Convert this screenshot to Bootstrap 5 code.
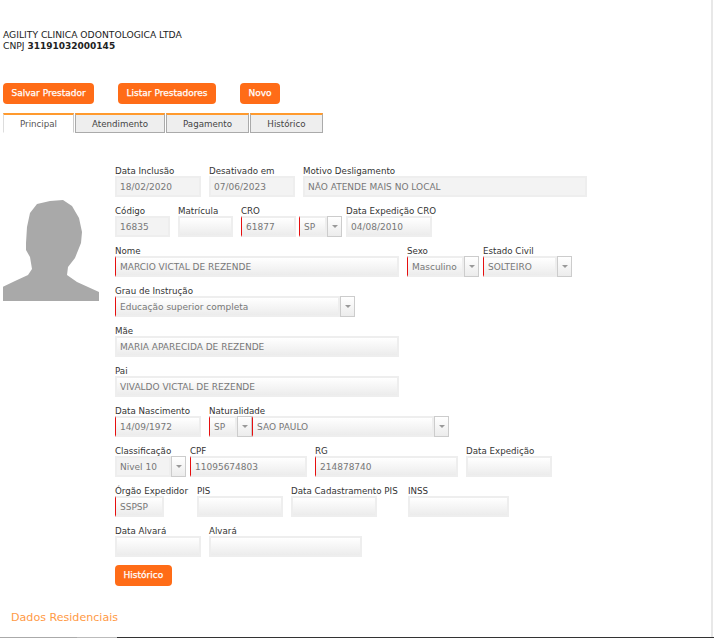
<!DOCTYPE html>
<html lang="pt-BR">
<head>
  <meta charset="UTF-8" />
  <meta name="viewport" content="width=device-width, initial-scale=1" />
  <title>Prestador</title>
  <link href="https://cdn.jsdelivr.net/npm/bootstrap@5.3.2/dist/css/bootstrap.min.css" rel="stylesheet" />
  <style>
    body {
      font-family: "DejaVu Sans", Verdana, sans-serif;
      font-size: 9px;
      line-height: 11px;
      color: #333;
      background: #fff;
    }
    .page-frame {
      height: 637px;
      width: 713px;
      border-right: 2px solid #e8e8e8;
      padding: 29px 0 0 3px;
      overflow: hidden;
    }
    .bottom-rule {
      height: 1px;
      background: linear-gradient(to right, #aaa 77px, #bbb 77px, #bbb 117px, #333 117px);
    }
    .company { height: 54px; color: #222; font-size: 9.2px; }
    .company b { font-size: 9px; }
    .orange-btn {
      background: #ff6c17;
      color: #fff;
      border: 0;
      border-radius: 4px;
      height: 21px;
      padding: 0 8.5px;
      font-size: 9px;
      line-height: 21px;
      -webkit-text-stroke: .25px #fff;
    }
    .top-actions { gap: 24px; margin-bottom: 9px; }
    .tab-strip { gap: 1px; margin-bottom: 29px; font-size: 8.7px; }
    .tab-item {
      height: 20px;
      line-height: 18px;
      border-top: 2px solid #ff9a2e;
      border-right: 1px solid #aaa;
      border-bottom: 1px solid #aaa;
      border-left: 1px solid #aaa;
      background: #eee;
      text-align: center;
      color: #444;
    }
    .tab-item.active { background: #fff; border-bottom-color: #fff; border-left-color: #ddd; border-right-color: #ccc; width: 71px; color: #555; }
    .tab-a { width: 90px; }
    .tab-p { width: 83px; }
    .tab-h { width: 73px; }
    .photo-col { width: 112px; padding-top: 38px; }
    .form-col { padding-top: 1px; }
    .field-row { gap: 8px; height: 40px; }
    .field-label { display: block; height: 13px; line-height: 11px; font-size: 8.7px; color: #333; white-space: nowrap; padding-top: 3px; }
    .box {
      height: 21px;
      border: 2px solid #eee;
      background: linear-gradient(#fff, #ececec);
      color: #777;
      padding-left: 3px;
      line-height: 19px;
      white-space: nowrap;
      overflow: hidden;
    }
    .box.flat { background: #f3f3f3; }
    .box.req { border-left: 1px solid #e60f0f; padding-left: 4px; }
    .combo { display: flex; height: 21px; }
    .combo .box { flex: 1 1 auto; }
    .arrow-btn {
      flex: 0 0 15px;
      height: 21px;
      border: 1px solid #ccc;
      background: linear-gradient(#fff, #ececec);
      display: flex;
      align-items: center;
      justify-content: center;
    }
    .arrow-btn::after {
      content: "";
      border-left: 3px solid transparent;
      border-right: 3px solid transparent;
      border-top: 3px solid #999;
    }
    .w-55 { width: 55px; }
    .w-86 { width: 86px; }
    .w-49 { width: 49px; }
    .w-101 { width: 101px; }
    .w-117 { width: 117px; }
    .w-143 { width: 143px; }
    .w-153 { width: 153px; }
    .w-284 { width: 284px; }
    .w-240 { width: 240px; }
    .w-72 { width: 72px; }
    .w-89 { width: 89px; }
    .w-43 { width: 43px; }
    .w-71 { width: 71px; }
    .w-197 { width: 197px; }
    .tight { gap: 4px; }
    .tight3 { gap: 3px; }
    .cro-gap { margin-left: -4px; }
    .pis-gap { margin-left: 25px; }
    .inss-gap { margin-left: 23px; }
    .section-link { color: #ff9a45; font-size: 11.1px; margin: 25px 0 0 8px; height: 14px; line-height: 14px; }
    .form-foot { padding-top: 2px; }
  </style>
</head>
<body>
  <div class="page-frame">
    <div class="company">
      AGILITY CLINICA ODONTOLOGICA LTDA<br />
      CNPJ <b>31191032000145</b>
    </div>

    <div class="d-flex top-actions">
      <button class="orange-btn" type="button">Salvar Prestador</button>
      <button class="orange-btn" type="button">Listar Prestadores</button>
      <button class="orange-btn" type="button">Novo</button>
    </div>

    <div class="d-flex tab-strip">
      <div class="tab-item active">Principal</div>
      <div class="tab-item tab-a">Atendimento</div>
      <div class="tab-item tab-p">Pagamento</div>
      <div class="tab-item tab-h">Histórico</div>
    </div>

    <div class="d-flex">
      <div class="photo-col">
        <svg class="d-block" width="97" height="101" viewBox="3 200 97 101">
          <path fill="#a9a9a9" d="M3 301V286.7L15 281 28 275 32 269 30 257 26 250 26 243 27 227 30 213 37 204 50 201 63 200 72 206 79 218 82 232 81 243 75 258 68 267 67 275 77 282 99 292V301Z" />
        </svg>
      </div>
      <div class="form-col">
        <div class="d-flex field-row">
          <div class="w-86"><span class="field-label">Data Inclusão</span><div class="box flat">18/02/2020</div></div>
          <div class="w-86"><span class="field-label">Desativado em</span><div class="box flat">07/06/2023</div></div>
          <div class="w-284"><span class="field-label">Motivo Desligamento</span><div class="box flat">NÃO ATENDE MAIS NO LOCAL</div></div>
        </div>
        <div class="d-flex field-row">
          <div class="w-55"><span class="field-label">Código</span><div class="box flat">16835</div></div>
          <div class="w-55"><span class="field-label">Matrícula</span><div class="box"></div></div>
          <div class="d-flex tight3">
            <div class="w-55"><span class="field-label">CRO</span><div class="box req">61877</div></div>
            <div class="w-43"><span class="field-label">&nbsp;</span><div class="combo"><div class="box req">SP</div><div class="arrow-btn"></div></div></div>
          </div>
          <div class="w-86 cro-gap"><span class="field-label">Data Expedição CRO</span><div class="box">04/08/2010</div></div>
        </div>
        <div class="d-flex field-row">
          <div class="w-284"><span class="field-label">Nome</span><div class="box req">MARCIO VICTAL DE REZENDE</div></div>
          <div class="d-flex tight">
            <div class="w-72"><span class="field-label">Sexo</span><div class="combo"><div class="box req">Masculino</div><div class="arrow-btn"></div></div></div>
            <div class="w-89"><span class="field-label">Estado Civil</span><div class="combo"><div class="box req">SOLTEIRO</div><div class="arrow-btn"></div></div></div>
          </div>
        </div>
        <div class="d-flex field-row">
          <div class="w-240"><span class="field-label">Grau de Instrução</span><div class="combo"><div class="box req">Educação superior completa</div><div class="arrow-btn"></div></div></div>
        </div>
        <div class="d-flex field-row">
          <div class="w-284"><span class="field-label">Mãe</span><div class="box">MARIA APARECIDA DE REZENDE</div></div>
        </div>
        <div class="d-flex field-row">
          <div class="w-284"><span class="field-label">Pai</span><div class="box">VIVALDO VICTAL DE REZENDE</div></div>
        </div>
        <div class="d-flex field-row">
          <div class="w-86"><span class="field-label">Data Nascimento</span><div class="box req">14/09/1972</div></div>
          <div class="d-flex">
            <div class="w-43"><span class="field-label">Naturalidade</span><div class="combo"><div class="box req">SP</div><div class="arrow-btn"></div></div></div>
            <div class="w-197"><span class="field-label">&nbsp;</span><div class="combo"><div class="box req">SAO PAULO</div><div class="arrow-btn"></div></div></div>
          </div>
        </div>
        <div class="d-flex field-row">
          <div class="d-flex tight">
            <div class="w-71"><span class="field-label">Classificação</span><div class="combo"><div class="box flat">Nivel 10</div><div class="arrow-btn"></div></div></div>
            <div class="w-117"><span class="field-label">CPF</span><div class="box req">11095674803</div></div>
          </div>
          <div class="w-143"><span class="field-label">RG</span><div class="box req">214878740</div></div>
          <div class="w-86"><span class="field-label">Data Expedição</span><div class="box"></div></div>
        </div>
        <div class="d-flex field-row">
          <div class="w-49"><span class="field-label">Órgão Expedidor</span><div class="box req">SSPSP</div></div>
          <div class="w-86 pis-gap"><span class="field-label">PIS</span><div class="box"></div></div>
          <div class="w-86"><span class="field-label">Data Cadastramento PIS</span><div class="box"></div></div>
          <div class="w-101 inss-gap"><span class="field-label">INSS</span><div class="box"></div></div>
        </div>
        <div class="d-flex field-row">
          <div class="w-86"><span class="field-label">Data Alvará</span><div class="box"></div></div>
          <div class="w-153"><span class="field-label">Alvará</span><div class="box"></div></div>
        </div>
        <div class="form-foot"><button class="orange-btn" type="button">Histórico</button></div>
      </div>
    </div>
    <div class="section-link">Dados Residenciais</div>
  </div>
  <div class="bottom-rule"></div>
  <script src="https://cdn.jsdelivr.net/npm/bootstrap@5.3.2/dist/js/bootstrap.bundle.min.js"></script>
</body>
</html>
